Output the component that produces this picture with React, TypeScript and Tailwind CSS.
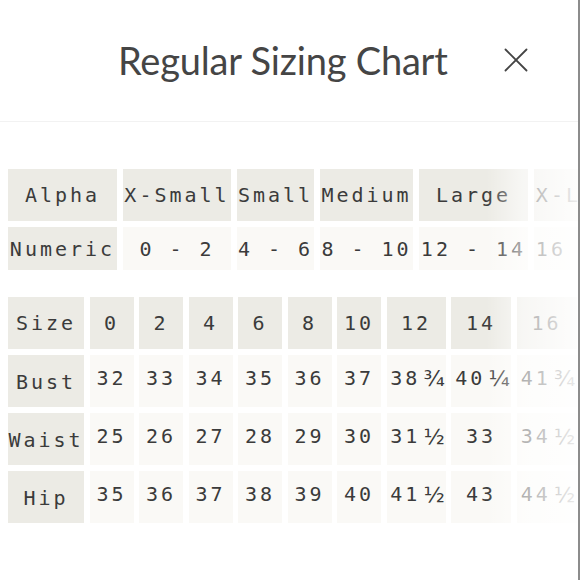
const ALPHA = [
  { label: "Alpha", num: "Numeric", w: "w-[109px]" },
  { label: "X-Small", num: "0 - 2", w: "w-[108px]" },
  { label: "Small", num: "4 - 6", w: "w-[77px]" },
  { label: "Medium", num: "8 - 10", w: "w-[93px]" },
  { label: "Large", num: "12 - 14", w: "w-[109px]" },
  { label: "X-Large", num: "16 - 18", w: "w-[109px]" },
];

const SIZES = ["0", "2", "4", "6", "8", "10", "12", "14", "16"];

const ROWS: { label: string; values: [string, string?][] }[] = [
  {
    label: "Bust",
    values: [["32"], ["33"], ["34"], ["35"], ["36"], ["37"], ["38", "¾"], ["40", "¼"], ["41", "¾"]],
  },
  {
    label: "Waist",
    values: [["25"], ["26"], ["27"], ["28"], ["29"], ["30"], ["31", "½"], ["33"], ["34", "½"]],
  },
  {
    label: "Hip",
    values: [["35"], ["36"], ["37"], ["38"], ["39"], ["40"], ["41", "½"], ["43"], ["44", "½"]],
  },
];

const head = "bg-[#ecebe5] flex items-center justify-center whitespace-nowrap";
const cell = "bg-[#faf9f6] flex items-center justify-center whitespace-nowrap";

export default function App() {
  return (
    <div className="w-[580px] h-[580px] bg-white overflow-hidden border-r-2 border-[#8c8c8c] text-[#3b3b3b]">
      {/* Header */}
      <div className="h-[122px] flex items-center pl-[118px] border-b border-[#f2f2f2]">
        <h1 className="font-['Lato',sans-serif] text-[38px] leading-none text-[#454545] tracking-[-0.2px] pb-[2px]">
          Regular Sizing Chart
        </h1>
        <button className="ml-auto mr-[50px] mb-[1px] text-[#444]">
          <svg width="24" height="24" viewBox="0 0 24 24" fill="none" stroke="currentColor" strokeWidth="1.8" strokeLinecap="round">
            <path d="M1.5 1.5 22.5 22.5M22.5 1.5 1.5 22.5" />
          </svg>
        </button>
      </div>

      {/* Tables */}
      <div className="relative overflow-hidden pt-[47px] pl-[8px] font-['DejaVu_Sans_Mono',monospace] text-[20px] tracking-[3px]">
        <div className="grid w-max grid-rows-[52px_43px] gap-x-[6px] gap-y-[6px] grid-flow-col">
          {ALPHA.map((c, i) => (
            <div key={c.label} className="contents">
              <div className={`${head} ${c.w}`}>{c.label}</div>
              <div className={`${i === 0 ? head : cell} ${c.w} pt-[1px]`}>{c.num}</div>
            </div>
          ))}
        </div>

        <div className="mt-[27px] grid w-max grid-cols-[76px_44px_44px_44px_44px_44px_44px_59px_60px_60px] auto-rows-[52px] gap-x-[5.5px] gap-y-[6px]">
          <div className={head}>Size</div>
          {SIZES.map((s) => (
            <div key={s} className={head}>
              {s}
            </div>
          ))}
          {ROWS.map((r) => (
            <div key={r.label} className="contents">
              <div className={`${head} pt-[2px]`}>{r.label}</div>
              {r.values.map(([whole, frac], i) => (
                <div key={i} className={`${cell} pb-[6px]`}>
                  {whole}
                  {frac && (
                    <span className="font-['DejaVu_Sans',sans-serif] text-[22px] tracking-normal ml-[3px] -mr-[3px]">
                      {frac}
                    </span>
                  )}
                </div>
              ))}
            </div>
          ))}
        </div>

        {/* right fade */}
        <div className="absolute top-0 bottom-0 right-0 w-[92px] pointer-events-none bg-[linear-gradient(to_right,rgba(255,255,255,0),rgba(255,255,255,0.6)_40%,rgba(255,255,255,0.9))]"></div>
      </div>
    </div>
  );
}
